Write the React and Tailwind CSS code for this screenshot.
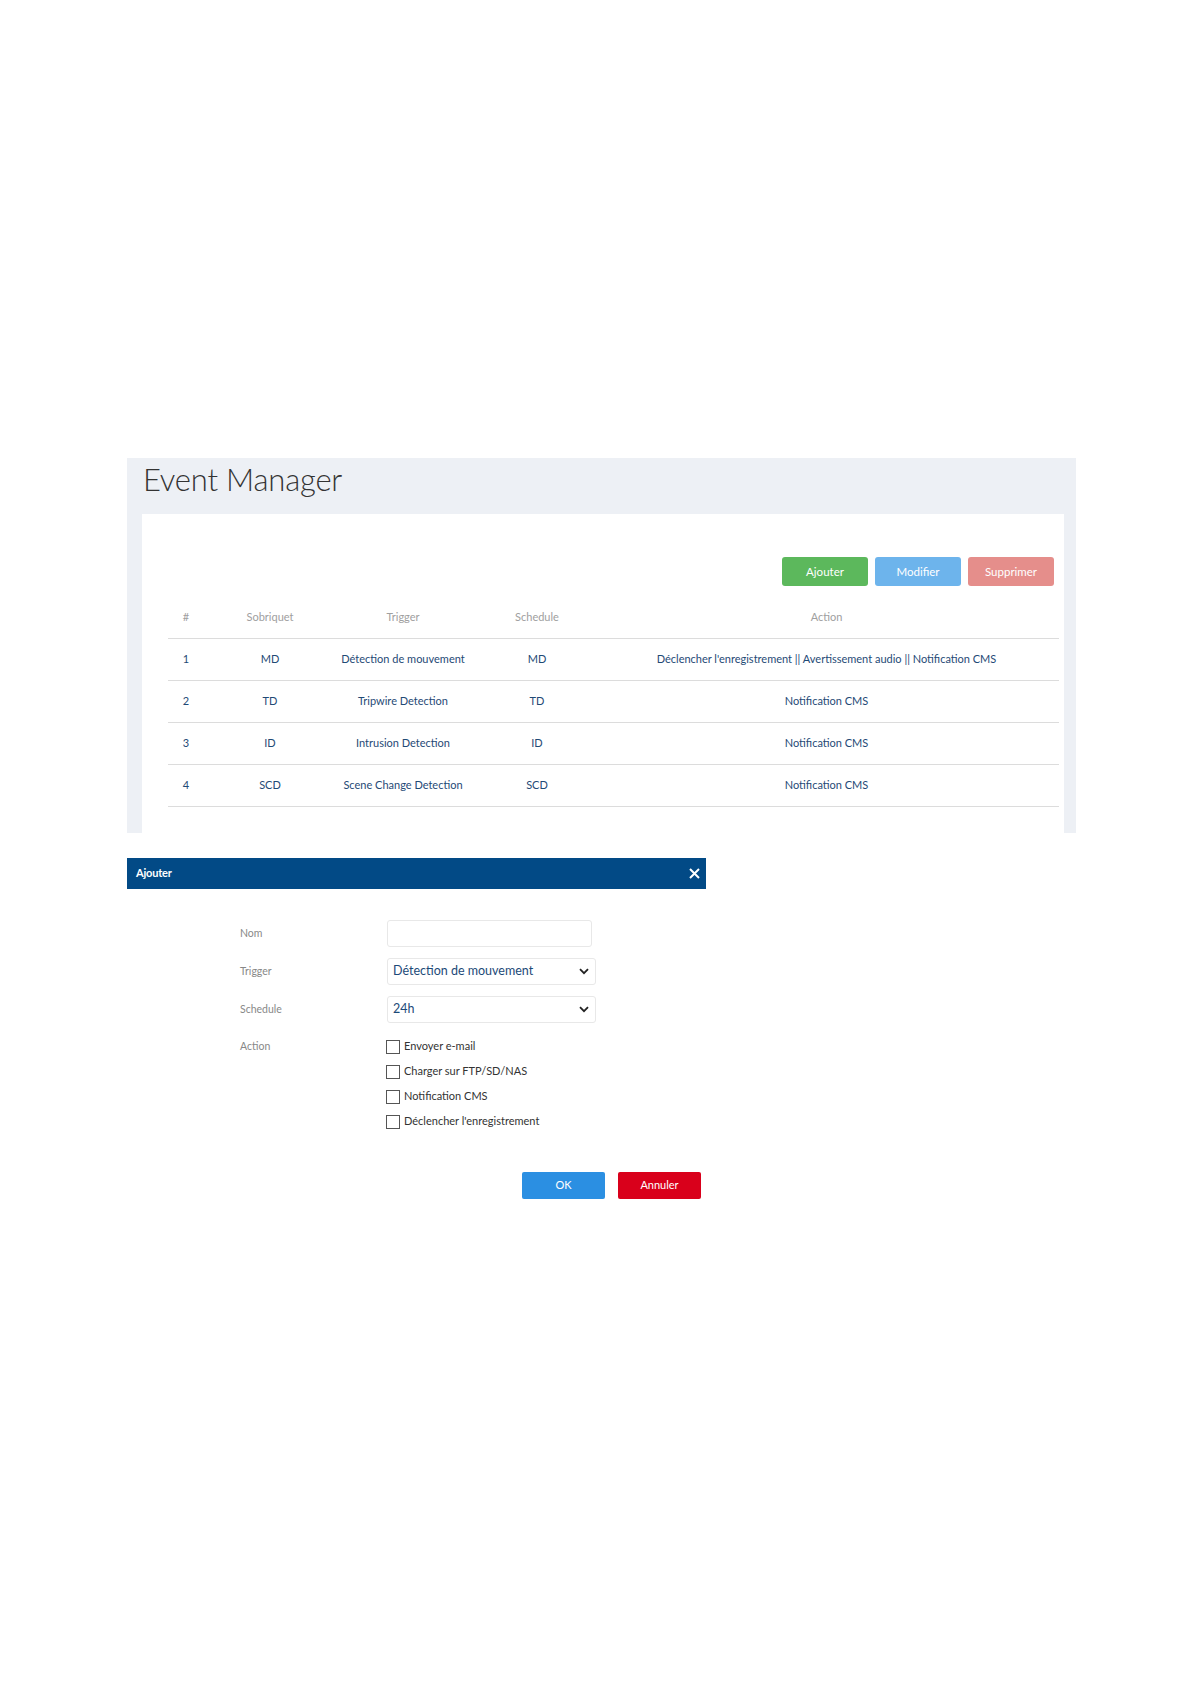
// App.jsx - Event Manager page + "Ajouter" dialog

const rows = [
  ["1", "MD", "Détection de mouvement", "MD", "Déclencher l'enregistrement || Avertissement audio || Notification CMS"],
  ["2", "TD", "Tripwire Detection", "TD", "Notification CMS"],
  ["3", "ID", "Intrusion Detection", "ID", "Notification CMS"],
  ["4", "SCD", "Scene Change Detection", "SCD", "Notification CMS"],
];

const actions = [
  "Envoyer e-mail",
  "Charger sur FTP/SD/NAS",
  "Notification CMS",
  "Déclencher l'enregistrement",
];

const Chevron = () => (
  <svg width="10" height="7" viewBox="0 0 10 7" fill="none" stroke="#222" strokeWidth="1.8">
    <path d="M1 1.2l4 4 4-4" />
  </svg>
);

const App = () => {
  return (
    <div className="w-[1190px] min-h-[1684px] bg-white pt-[458px] pl-[127px] font-['Lato',sans-serif]">

      {/* Event Manager panel */}
      <section className="w-[949px] h-[375px] bg-[#edf0f5] overflow-hidden">
        <h1 className="pl-[16px] pt-[2px] text-[31px] leading-[38px] font-light text-[#333] tracking-[-0.2px]">
          Event Manager
        </h1>
        <div className="mt-[16px] ml-[15px] mr-[12px] h-full bg-white pt-[43px]">
          <div className="flex justify-end gap-[7px] pr-[10px]">
            <button className="w-[86px] h-[29px] rounded-[3px] bg-[#5cb85c] text-white text-[11.5px]">Ajouter</button>
            <button className="w-[86px] h-[29px] rounded-[3px] bg-[#6db4ec] text-white text-[11.5px]">Modifier</button>
            <button className="w-[86px] h-[29px] rounded-[3px] bg-[#e58e8b] text-white text-[11.5px]">Supprimer</button>
          </div>

          <table className="mt-[10px] ml-[26px] w-[891px] table-fixed border-collapse text-center">
            <colgroup>
              <col className="w-[36px]" />
              <col className="w-[132px]" />
              <col className="w-[134px]" />
              <col className="w-[134px]" />
              <col />
            </colgroup>
            <thead>
              <tr className="h-[42px] border-b border-[#dcdcdc] text-[11px] text-[#a0a0a0]">
                <th className="font-normal">#</th>
                <th className="font-normal">Sobriquet</th>
                <th className="font-normal">Trigger</th>
                <th className="font-normal">Schedule</th>
                <th className="font-normal pr-[10px]">Action</th>
              </tr>
            </thead>
            <tbody>
              {rows.map((r) => (
                <tr key={r[0]} className="h-[42px] border-b border-[#dcdcdc] text-[11px] text-[#1f4a76]">
                  <td>{r[0]}</td>
                  <td>{r[1]}</td>
                  <td>{r[2]}</td>
                  <td>{r[3]}</td>
                  <td className="pr-[10px]">{r[4]}</td>
                </tr>
              ))}
            </tbody>
          </table>
        </div>
      </section>

      {/* Ajouter dialog */}
      <div className="mt-[25px] w-[579px] bg-white">
        <div className="h-[31px] bg-[#024a86] flex items-center justify-between pl-[9px] pr-[6px]">
          <span className="text-[11px] font-bold text-white tracking-[-0.2px]">Ajouter</span>
          <svg width="11" height="11" viewBox="0 0 11 11" stroke="white" strokeWidth="2">
            <path d="M1 1l9 9M10 1l-9 9" />
          </svg>
        </div>

        <div className="pt-[31px] pl-[113px] pr-[5px]">
          <div className="flex items-center mb-[11px]">
            <span className="w-[147px] text-[10.5px] text-[#888]">Nom</span>
            <div className="w-[205px] h-[27px] border border-[#e8e8e8] rounded-[3px]" />
          </div>
          <div className="flex items-center mb-[11px]">
            <span className="w-[147px] text-[10.5px] text-[#888]">Trigger</span>
            <div className="w-[209px] h-[27px] border border-[#e8e8e8] rounded-[3px] flex items-center justify-between pl-[5px] pr-[6px] text-[12.5px] font-normal text-[#1c4a78]">
              <span>Détection de mouvement</span>
              <Chevron />
            </div>
          </div>
          <div className="flex items-center">
            <span className="w-[147px] text-[10.5px] text-[#888]">Schedule</span>
            <div className="w-[209px] h-[27px] border border-[#e8e8e8] rounded-[3px] flex items-center justify-between pl-[5px] pr-[6px] text-[12.5px] font-normal text-[#1c4a78]">
              <span>24h</span>
              <Chevron />
            </div>
          </div>

          <div className="flex mt-[11px]">
            <span className="w-[146px] h-[25px] flex items-center text-[10.5px] text-[#888]">Action</span>
            <div className="flex flex-col">
              {actions.map((a) => (
                <label key={a} className="h-[25px] flex items-center text-[11px] text-[#333]">
                  <span className="w-[14px] h-[14px] border border-[#555] bg-white" />
                  <span className="ml-[4px]">{a}</span>
                </label>
              ))}
            </div>
          </div>

          <div className="flex justify-end gap-[13px] mt-[38px]">
            <button className="w-[83px] h-[27px] bg-[#2b8fe2] text-white text-[11px] rounded-[2px]">OK</button>
            <button className="w-[83px] h-[27px] bg-[#d9001b] text-white text-[11px] rounded-[2px]">Annuler</button>
          </div>
        </div>
      </div>
    </div>
  );
};

export default App;
